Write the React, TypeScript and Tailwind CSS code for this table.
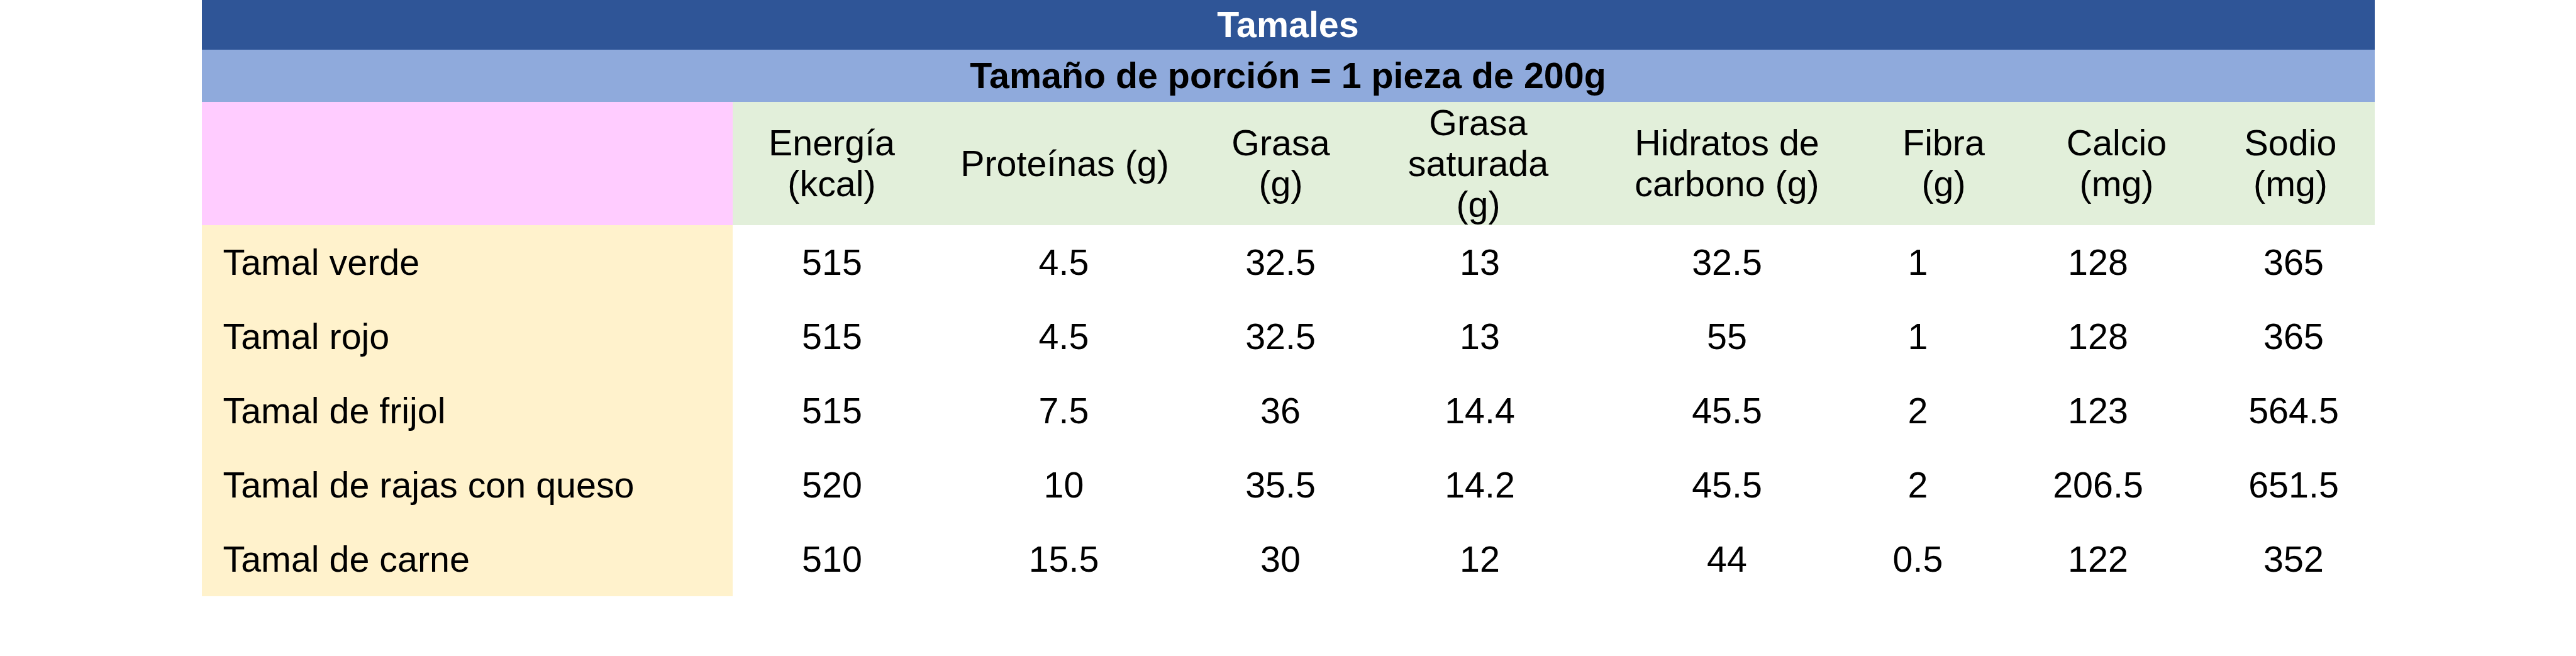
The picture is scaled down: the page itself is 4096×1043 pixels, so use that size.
import React from "react";

const rows: [string, string[]][] = [
  ["Tamal verde", ["515", "4.5", "32.5", "13", "32.5", "1", "128", "365"]],
  ["Tamal rojo", ["515", "4.5", "32.5", "13", "55", "1", "128", "365"]],
  ["Tamal de frijol", ["515", "7.5", "36", "14.4", "45.5", "2", "123", "564.5"]],
  ["Tamal de rajas con queso", ["520", "10", "35.5", "14.2", "45.5", "2", "206.5", "651.5"]],
  ["Tamal de carne", ["510", "15.5", "30", "12", "44", "0.5", "122", "352"]],
];

const headers: string[][] = [
  ["Energía", "(kcal)"],
  ["Proteínas (g)"],
  ["Grasa", "(g)"],
  ["Grasa", "saturada", "(g)"],
  ["Hidratos de", "carbono (g)"],
  ["Fibra", "(g)"],
  ["Calcio", "(mg)"],
  ["Sodio", "(mg)"],
];

export default function App() {
  return (
    <div
      className="w-full h-[1043px] bg-white text-black"
      style={{ fontFamily: '"Liberation Sans", Arial, sans-serif' }}
    >
      <div className="mx-auto w-[3455px] grid grid-cols-[844px_317px_420px_269px_365px_421px_186px_387px_246px] text-[57.4px] leading-[65px]">
        <div className="col-span-9 h-[79px] bg-[#2F5597] flex items-center justify-center font-bold text-white">
          Tamales
        </div>
        <div className="col-span-9 h-[83px] bg-[#8FAADC] flex items-center justify-center font-bold">
          Tamaño de porción = 1 pieza de 200g
        </div>
        <div className="h-[196px] bg-[#FFCCFF]" />
        <div className="col-span-8 h-[196px] bg-[#E2EFDA] grid grid-cols-[316px_425px_262px_366px_425px_264px_286px_1fr]">
          {headers.map((lines, i) => (
            <div key={i} className="flex flex-col items-center justify-center text-center">
              {lines.map((l, j) => (
                <span key={j} className="whitespace-nowrap">
                  {l}
                </span>
              ))}
            </div>
          ))}
        </div>
        {rows.map(([name, vals], r) => (
          <React.Fragment key={r}>
            <div className="h-[118px] bg-[#FFF2CC] flex items-center pl-[34px] whitespace-nowrap">
              {name}
            </div>
            {vals.map((v, c) => (
              <div
                key={c}
                className={`h-[118px] flex items-center justify-center ${c === 7 ? "pr-[11px]" : ""}`}
              >
                {v}
              </div>
            ))}
          </React.Fragment>
        ))}
      </div>
    </div>
  );
}
